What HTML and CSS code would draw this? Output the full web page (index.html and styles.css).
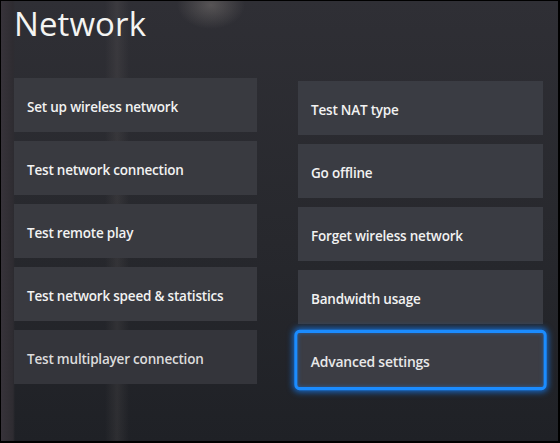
FILE: index.html
```html
<!DOCTYPE html>
<html lang="en">
<head>
  <meta charset="UTF-8">
  <title>Network</title>
  <link rel="stylesheet" href="styles.css">
</head>
<body>
  <div class="screen">
    <h1 class="title">Network</h1>
    <div class="menu">
      <div class="column">
        <div class="tile">Set up wireless network</div>
        <div class="tile">Test network connection</div>
        <div class="tile">Test remote play</div>
        <div class="tile">Test network speed &amp; statistics</div>
        <div class="tile dim">Test multiplayer connection</div>
      </div>
      <div class="column right">
        <div class="tile">Test NAT type</div>
        <div class="tile">Go offline</div>
        <div class="tile">Forget wireless network</div>
        <div class="tile">Bandwidth usage</div>
        <div class="tile focused">Advanced settings</div>
      </div>
    </div>
  </div>
</body>
</html>
```

FILE: styles.css
```css
html, body { margin: 0; padding: 0; }
body { width: 560px; height: 443px; box-sizing: border-box; border-style: solid; border-color: #000; border-width: 1px 2px 2px 1px; overflow: hidden; background: #24252a; font-family: "Open Sans", "Noto Sans", sans-serif; }
.screen { height: 100%; box-sizing: border-box; padding: 0 0 0 13px;
  background:
    radial-gradient(ellipse 34px 24px at 210px 4px, rgba(190,180,170,0.28), rgba(0,0,0,0)),
    linear-gradient(90deg, rgba(0,0,0,0) 104px, rgba(150,140,135,0.12) 116px, rgba(0,0,0,0) 128px),
    linear-gradient(90deg, #37333a 0, #2e2c31 12px, rgba(0,0,0,0) 14px),
    linear-gradient(180deg, #2f2f35 0%, #27282d 55%, #1f2126 100%); }
.title { margin: 0; font-size: 33px; line-height: 46px; font-weight: 400; color: #f4f4f2; letter-spacing: 0.1px; }
.menu { display: flex; gap: 41px; margin-top: 31px; }
.column { display: flex; flex-direction: column; gap: 9px; width: 243px; }
.column.right { width: 245px; padding-top: 3px; }
.tile { height: 54px; box-sizing: border-box; display: flex; align-items: center; padding: 4px 0 0 13px; background: #393a40; color: #f2f2f2; font-size: 13.5px; font-weight: 600; letter-spacing: -0.2px; }
.tile.dim { color: #dcdcdc; background: #34353b; }
.column.right .tile { background: #3a3c43; }
.tile.focused { background: #3c3d44 !important; border: 3px solid #1b8cff; border-radius: 5px; padding-left: 13px; padding-top: 2px; transform: scale(1.03, 1.12); box-shadow: 0 0 6px 1px rgba(20,130,255,0.75), inset 0 0 4px rgba(20,130,255,0.5); color: #e8e8e8; }
```
